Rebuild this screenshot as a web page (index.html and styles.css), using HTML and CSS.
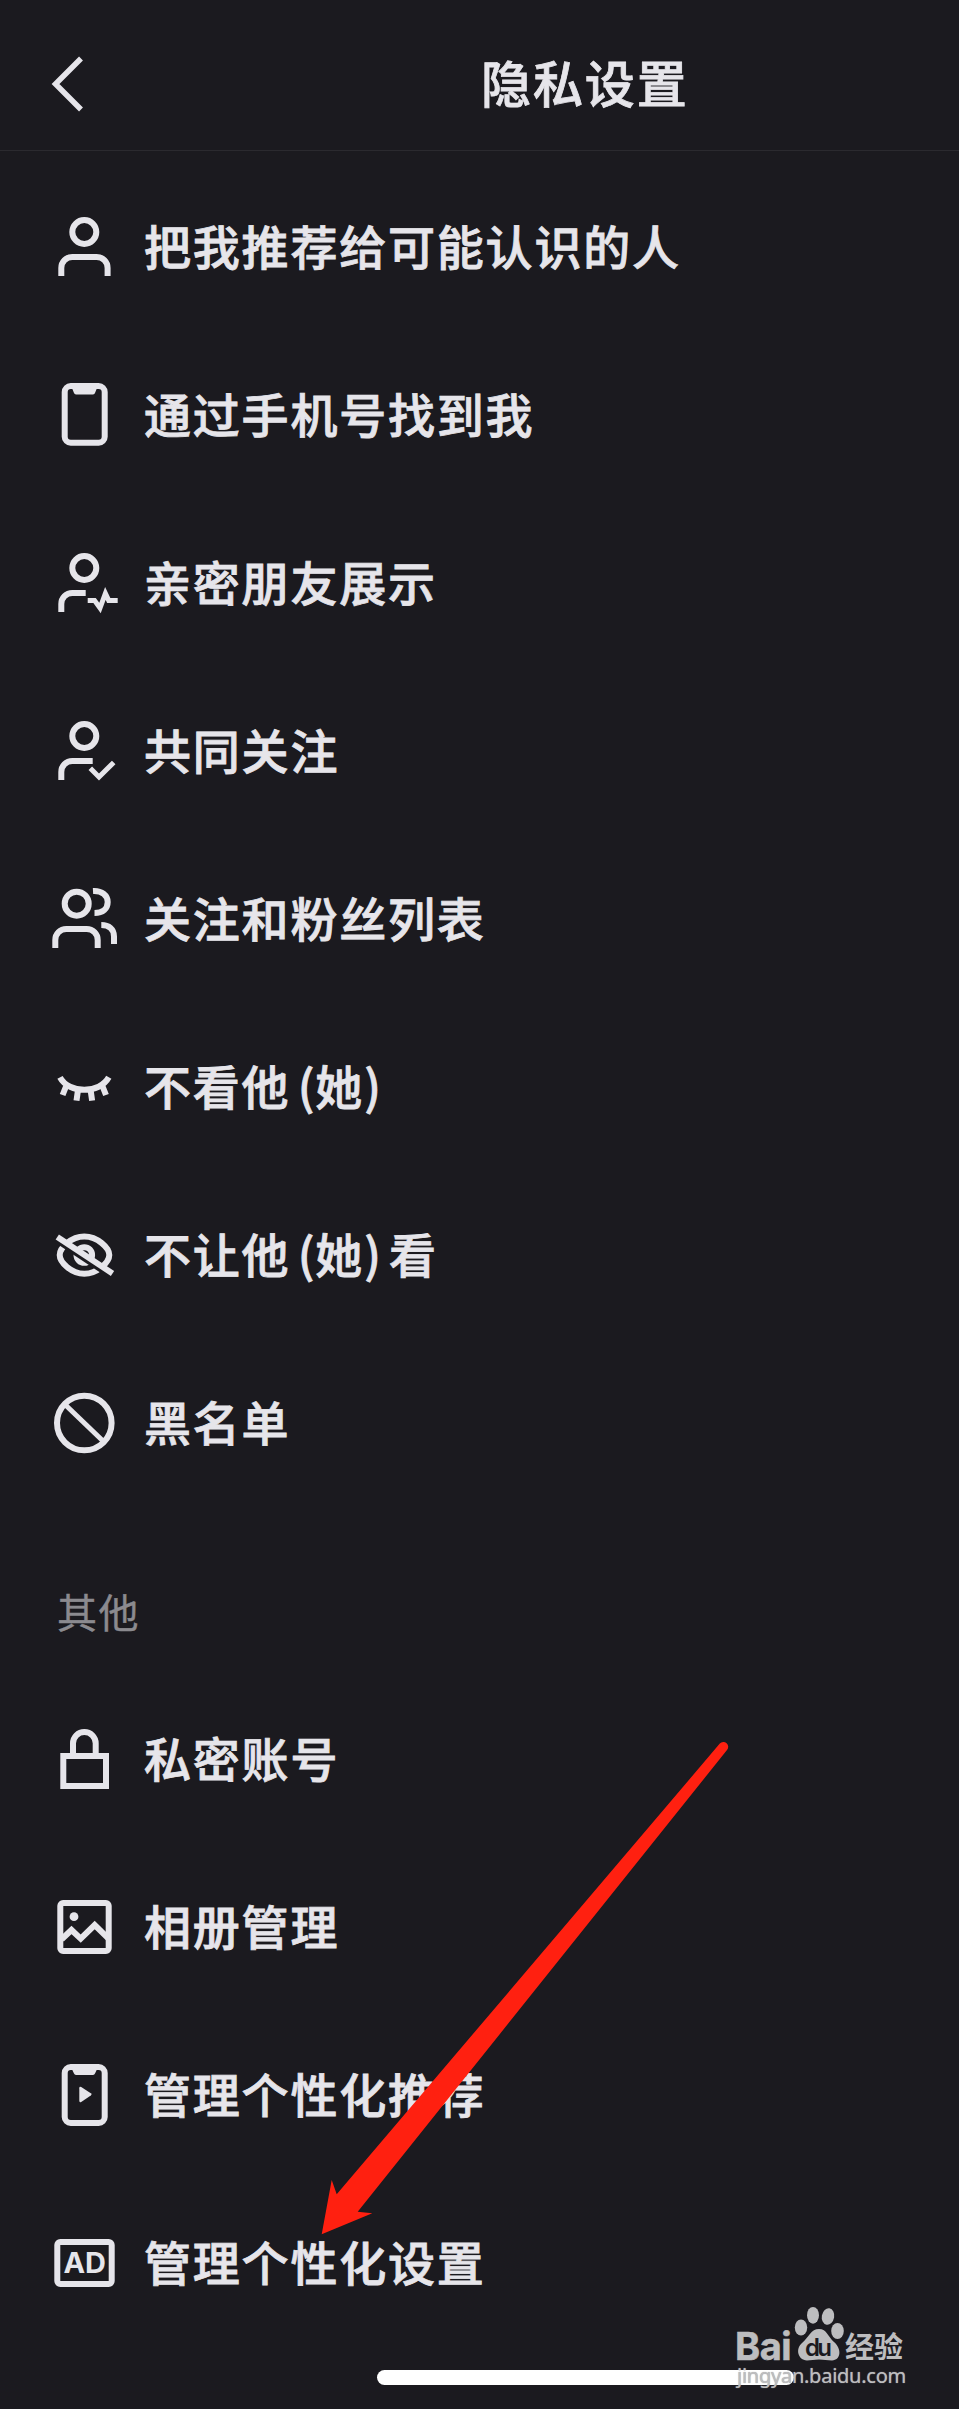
FILE: index.html
```html
<!DOCTYPE html>
<html lang="zh-CN">
  <head>
    <meta charset="UTF-8" />
    <meta name="viewport" content="width=device-width, initial-scale=1.0" />
    <title>隐私设置</title>
    <link rel="stylesheet" href="styles.css">
  </head>
  <body>
    <div class="page">
      <header class="header">
        <svg class="back" viewBox="0 0 32 56">
          <path d="M30 2.500 L4.500 28 L30 53.500" />
        </svg>
        <h1 class="title">隐私设置</h1>
      </header>

      <ul class="list">
        <li class="row">
          <svg class="icon" viewBox="0 0 64 64">
            <circle cx="32.3" cy="17" r="12" />
            <path d="M9.3 61V53a11 11 0 0 1 11-11h24.3a11 11 0 0 1 11 11v8" />
          </svg>
          <span>把我推荐给可能认识的人</span>
        </li>
        <li class="row">
          <svg class="icon" viewBox="0 0 64 64">
            <rect x="12.7" y="3" width="40" height="56.7" rx="6" />
            <path class="solid" d="M19.5 4h26l-1.3 3-1.2 3q-.5 1.4-2 1.4H24q-1.5 0-2-1.4l-1.2-3z" />
          </svg>
          <span>通过手机号找到我</span>
        </li>
        <li class="row">
          <svg class="icon" viewBox="0 0 64 64">
            <circle cx="32.3" cy="17" r="12" />
            <path d="M9.3 61V53a11 11 0 0 1 11-11h13.4" />
            <path class="thin" d="M35.7 49.4h6.8L48 57l5.4-14.5 3.3 6.9h9" />
          </svg>
          <span>亲密朋友展示</span>
        </li>
        <li class="row">
          <svg class="icon" viewBox="0 0 64 64">
            <circle cx="32.3" cy="17" r="12" />
            <path d="M9.3 61V53a11 11 0 0 1 11-11h20.4" />
            <path class="thin" d="M38.3 49.3L47 58l14.7-14.6" />
          </svg>
          <span>共同关注</span>
        </li>
        <li class="row">
          <svg class="icon" viewBox="0 0 64 64">
            <circle cx="24.7" cy="16.7" r="12" />
            <path d="M3.3 61V53a11 11 0 0 1 11-11h20.4a11 11 0 0 1 11 11v8" />
            <path d="M41 4C50 3.500 55.700 8.500 55.700 15S51 26 42.500 26" />
            <path d="M49.300 38C57 38 62 42 62 49.500V57" />
          </svg>
          <span>关注和粉丝列表</span>
        </li>
        <li class="row">
          <svg class="icon" viewBox="0 0 64 64">
            <path d="M8 22.300C17 39 47.600 39 56.800 22.300" />
            <path class="lash" d="M14 31.500l-3.400 8.500M26 35l-1.500 10.700M38.600 35l1.500 10.700M50.600 31.500l3.400 8.500" />
          </svg>
          <span>不看他 <i class="paren">(</i>她<i class="paren">)</i></span>
        </li>
        <li class="row">
          <svg class="icon" viewBox="0 0 64 64">
            <path d="M7.700 32C7.700 25 19 13.500 32.300 13.500S57.300 25 57.300 32 45.600 50.700 32.300 50.700 7.700 39 7.700 32z" />
            <circle cx="32.3" cy="32" r="7.8" />
            <path class="cut" d="M0 15.200L59.200 54.400" />
            <path d="M5.300 14L60.500 50.400" />
          </svg>
          <span>不让他 <i class="paren">(</i>她<i class="paren">)</i> 看</span>
        </li>
        <li class="row">
          <svg class="icon" viewBox="0 0 64 64">
            <circle cx="32.3" cy="32" r="27.3" />
            <path class="thin" d="M13.500 14L51 50" />
          </svg>
          <span>黑名单</span>
        </li>
      </ul>

      <h2 class="section">其他</h2>

      <ul class="list">
        <li class="row">
          <svg class="icon" viewBox="0 0 64 64">
            <rect x="11.3" y="29" width="42.7" height="30" />
            <path d="M21 27V16.300a11.300 11.300 0 0 1 22.700 0V27" />
          </svg>
          <span>私密账号</span>
        </li>
        <li class="row">
          <svg class="icon" viewBox="0 0 64 64">
            <rect x="8.3" y="8" width="48.4" height="48" rx="2.8" />
            <circle class="solid" cx="22" cy="21.7" r="4.4" />
            <path d="M9.700 44.300L19.500 35l9.200 8.700L42.700 30l13.600 13.300" />
          </svg>
          <span>相册管理</span>
        </li>
        <li class="row">
          <svg class="icon" viewBox="0 0 64 64">
            <rect x="12.7" y="4" width="40" height="56" rx="6" />
            <path class="solid" d="M19.500 5h26l-1.300 3-1.200 2.500q-.5 1.400-2 1.400H24q-1.500 0-2-1.400l-1.200-2.500z" />
            <path class="solid" d="M27.300 25.200q0-2.200 1.900-1.100l9.600 6.200q1.600 1.100 0 2.200l-9.600 6.400q-1.900 1.100-1.900-1.100z" />
          </svg>
          <span>管理个性化推荐</span>
        </li>
        <li class="row">
          <svg class="icon" viewBox="0 0 64 64">
            <rect x="5.3" y="11" width="54.4" height="42" rx="3" />
            <text class="ad" x="11.5" y="42" textLength="42.500" lengthAdjust="spacingAndGlyphs">AD</text>
          </svg>
          <span>管理个性化设置</span>
        </li>
      </ul>

      <div class="home-bar"></div>

      <svg class="arrow" viewBox="0 0 410 496">
        <path d="M399.800 3.600A4.700 4.700 0 0 1 407 10L37.700 471.800l14.600 1.400L1.700 494.300 11.700 440l5 14.300z" />
      </svg>

      <div class="watermark">
        <div class="brand">
          <span class="bai">Bai</span>
          <svg class="paw" viewBox="0 0 50 56">
            <ellipse cx="7" cy="21.5" rx="6.2" ry="8" />
            <ellipse cx="19" cy="9.3" rx="6" ry="8.4" />
            <ellipse cx="34" cy="10.5" rx="6.2" ry="8.4" transform="rotate(10 34 10.5)" />
            <ellipse cx="43.5" cy="25" rx="6.3" ry="8" />
            <path d="M25 23C33 23 34 31 40 36C48 43 47 54 38 54.500C33 54.500 30 53.500 25 53.500S17 54.500 13 54.500C4 54 1 43 8 37C15 31 17 23 25 23z" />
            <text x="11" y="49.5" textLength="27">du</text>
          </svg>
          <span class="jingyan">经验</span>
        </div>
        <div class="url">jingyan.baidu.com</div>
      </div>
    </div>
  </body>
</html>
```

FILE: styles.css
```css
body {
  margin: 0;
  background: #1b1a1f;
  color: #e6e5ea;
  font-family: "Noto Sans CJK SC", sans-serif;
}
.page {
  position: relative;
  width: 959px;
  height: 2409px;
  overflow: hidden;
}
.header {
  display: flex;
  align-items: center;
  box-sizing: border-box;
  height: 151px;
  padding: 18px 0 0 51px;
  border-bottom: 1px solid #2b2a2f;
}
.back {
  width: 32px;
  height: 56px;
  fill: none;
  stroke: #e6e5ea;
  stroke-width: 5.5;
}
.title {
  margin: 0 0 6px 398px;
  font-size: 50px;
  font-weight: 500;
  letter-spacing: 1.9px;
  line-height: 60px;
  -webkit-text-stroke: 0.8px #e6e5ea;
}
.list {
  margin: 0;
  padding: 0;
  list-style: none;
}
.header + .list {
  padding-top: 12px;
}
.row {
  display: flex;
  align-items: center;
  gap: 28px;
  height: 168px;
  padding-left: 52px;
  font-size: 47px;
  font-weight: 500;
  letter-spacing: 1.8px;
  word-spacing: -5px;
  white-space: pre;
}
.row span {
  padding-bottom: 6px;
  -webkit-text-stroke: 0.8px #e6e5ea;
}
.icon {
  width: 64px;
  height: 64px;
  overflow: visible;
  fill: none;
  stroke: #e6e5ea;
  stroke-width: 6;
}
.icon .thin {
  stroke-width: 5;
}
.icon .lash {
  stroke-width: 6;
}
.icon .solid {
  fill: #e6e5ea;
  stroke: none;
}
.icon .cut {
  stroke: #1b1a1f;
  stroke-width: 4;
}
.icon .ad {
  fill: #e6e5ea;
  stroke: none;
  font-family: Inter, sans-serif;
  font-size: 28px;
  font-weight: 700;
  letter-spacing: 0;
}
.paren {
  font-style: normal;
  letter-spacing: 0.800px;
}
.section {
  box-sizing: border-box;
  height: 168px;
  margin: 0;
  padding: 42px 0 0 57px;
  color: #8b8a8f;
  font-size: 40px;
  font-weight: 400;
  letter-spacing: 1.6px;
  line-height: 124px;
  -webkit-text-stroke: 0.4px #8b8a8f;
}
.home-bar {
  width: 417px;
  height: 15px;
  margin: 23px 0 0 377px;
  border-radius: 8px;
  background: #fff;
}

/* red pointer drawn over the list */
.arrow {
  position: absolute;
  left: 320px;
  top: 1740px;
  width: 410px;
  height: 496px;
  fill: #ff2010;
}

.watermark {
  position: absolute;
  left: 735px;
  top: 2306px;
  color: #bdbdbf;
}
.brand {
  display: flex;
  align-items: flex-end;
  height: 56px;
}
.bai {
  width: 59px;
  font-family: Inter, sans-serif;
  font-size: 38px;
  font-weight: 700;
  letter-spacing: -0.5px;
  line-height: 32px;
  -webkit-text-stroke: 0.6px #bdbdbf;
}
.paw {
  width: 50px;
  height: 56px;
  fill: #bdbdbf;
}
.paw text {
  fill: #1b1a1f;
  font-family: Inter, sans-serif;
  font-size: 24px;
  font-weight: 600;
}
.jingyan {
  margin: 0 0 2px 1px;
  font-size: 29px;
  font-weight: 700;
  line-height: 30px;
}
.url {
  margin: 0 0 0 2px;
  font-family: "Noto Sans", sans-serif;
  font-size: 20px;
  letter-spacing: -0.25px;
  line-height: 28px;
  text-shadow: 0 0 1px #9b9b9d;
}
```
